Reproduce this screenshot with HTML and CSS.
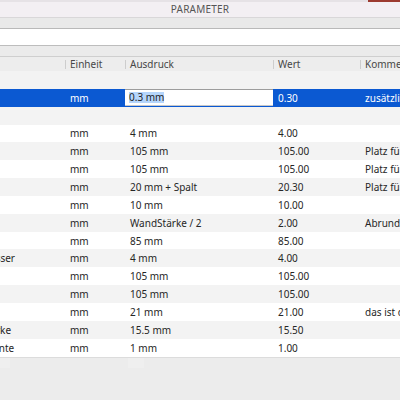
FILE: index.html
```html
<!DOCTYPE html>
<html lang="de">
<head>
<meta charset="utf-8">
<title>Parameter</title>
<link rel="stylesheet" href="styles.css">
</head>
<body>
<div class="window">
  <div class="topstrip"><span class="close-tab"></span></div>
  <div class="titlebar">PARAMETER</div>
  <div class="toolbar"></div>
  <div class="filter"></div>
  <div class="subbar"></div>

  <div class="table">
    <div class="row head">
      <div class="cell name">Name</div>
      <div class="cell sep">Einheit</div>
      <div class="cell sep">Ausdruck</div>
      <div class="cell sep">Wert</div>
      <div class="cell sep">Kommentar</div>
    </div>

    <div class="row odd"><div class="cell name"></div><div class="cell"></div><div class="cell"></div><div class="cell"></div><div class="cell"></div></div>

    <div class="row selected">
      <div class="cell name">Spalt</div>
      <div class="cell">mm</div>
      <div class="cell edit"><span class="field"><span class="sel">0.3 mm</span></span></div>
      <div class="cell">0.30</div>
      <div class="cell">zusätzlicher Spalt</div>
    </div>

    <div class="row odd"><div class="cell name"></div><div class="cell"></div><div class="cell"></div><div class="cell"></div><div class="cell"></div></div>

    <div class="row"><div class="cell name">Dicke</div><div class="cell">mm</div><div class="cell">4 mm</div><div class="cell">4.00</div><div class="cell"></div></div>
    <div class="row odd"><div class="cell name">Breite</div><div class="cell">mm</div><div class="cell">105 mm</div><div class="cell">105.00</div><div class="cell">Platz für Inhalt</div></div>
    <div class="row"><div class="cell name">Tiefe</div><div class="cell">mm</div><div class="cell">105 mm</div><div class="cell">105.00</div><div class="cell">Platz für Inhalt</div></div>
    <div class="row odd"><div class="cell name">Höhe</div><div class="cell">mm</div><div class="cell">20 mm + Spalt</div><div class="cell">20.30</div><div class="cell">Platz für Deckel</div></div>
    <div class="row"><div class="cell name">Rand</div><div class="cell">mm</div><div class="cell">10 mm</div><div class="cell">10.00</div><div class="cell"></div></div>
    <div class="row odd"><div class="cell name">Radius</div><div class="cell">mm</div><div class="cell">WandStärke / 2</div><div class="cell">2.00</div><div class="cell">Abrundung</div></div>
    <div class="row"><div class="cell name">Länge</div><div class="cell">mm</div><div class="cell">85 mm</div><div class="cell">85.00</div><div class="cell"></div></div>
    <div class="row odd"><div class="cell name">LochDurchmesser</div><div class="cell">mm</div><div class="cell">4 mm</div><div class="cell">4.00</div><div class="cell"></div></div>
    <div class="row"><div class="cell name">Außen</div><div class="cell">mm</div><div class="cell">105 mm</div><div class="cell">105.00</div><div class="cell"></div></div>
    <div class="row odd"><div class="cell name">Innen</div><div class="cell">mm</div><div class="cell">105 mm</div><div class="cell">105.00</div><div class="cell"></div></div>
    <div class="row"><div class="cell name">Boden</div><div class="cell">mm</div><div class="cell">21 mm</div><div class="cell">21.00</div><div class="cell">das ist der Boden</div></div>
    <div class="row odd"><div class="cell name">RandWandStärke</div><div class="cell">mm</div><div class="cell">15.5 mm</div><div class="cell">15.50</div><div class="cell"></div></div>
    <div class="row"><div class="cell name">Radius Oberkante</div><div class="cell">mm</div><div class="cell">1 mm</div><div class="cell">1.00</div><div class="cell"></div></div>
  </div>

  <div class="footer">
    <span class="ghost ghost-a"></span>
    <span class="ghost ghost-b"></span>
  </div>
</div>
</body>
</html>
```

FILE: styles.css
```css
html, body {
  margin: 0;
  padding: 0;
  width: 400px;
  height: 400px;
  overflow: hidden;
  background: #ececec;
  font-family: "Noto Sans", "Open Sans", sans-serif;
  font-size: 10px;
  color: #262626;
}

.window {
  width: 400px;
  height: 400px;
  overflow: hidden;
  display: flex;
  flex-direction: column;
}

.topstrip {
  height: 2px;
  background: #e6e2e6;
  position: relative;
}

.close-tab {
  position: absolute;
  right: 0;
  top: 0;
  width: 32px;
  height: 2px;
  background: #9c3a30;
}

.titlebar {
  height: 15px;
  line-height: 15px;
  background: #f3eff3;
  border-bottom: 1px solid #d9d7d9;
  text-align: center;
  color: #555;
  font-size: 10px;
  letter-spacing: 0.2px;
}

.toolbar {
  height: 10px;
  background: #e9e9e9;
  border-bottom: 1px solid #b9b9b9;
}

.filter {
  height: 16px;
  background: #ffffff;
  border-bottom: 1px solid #bdbdbd;
}

.subbar {
  height: 10px;
  background: #ebebeb;
  border-bottom: 1px solid #cfcfcf;
}

/* table is scrolled sideways: the name column starts left of the view */
.table {
  width: 560px;
  margin-left: -70px;
  display: flex;
  flex-direction: column;
}

.row {
  display: grid;
  grid-template-columns: 135px 60px 148px 87px 130px;
  height: 17.85px;
  align-items: center;
  background: #ffffff;
}

.row.odd {
  background: #f3f3f3;
}

.row.head {
  height: 14px;
  background: #ededed;
  color: #474747;
}

.cell {
  padding-left: 5px;
  white-space: nowrap;
  overflow: hidden;
  height: 100%;
  display: flex;
  align-items: center;
  box-sizing: border-box;
}

.cell.name {
  padding-left: 0;
}

.head .cell.sep {
  position: relative;
}

.head .cell.sep::before {
  content: "";
  position: absolute;
  left: 0;
  top: 3px;
  bottom: 2px;
  width: 1px;
  background: #cdcdcd;
}

.row.selected {
  background: #0b59d2;
  color: #ffffff;
}

.cell.edit {
  padding: 0;
}

.field {
  flex: 1;
  height: 17px;
  background: #ffffff;
  border-top: 1px solid #9d9d9d;
  border-bottom: 1px solid #c8c8c8;
  box-sizing: border-box;
  display: flex;
  align-items: center;
  padding-left: 4px;
  color: #1f1f1f;
}

.sel {
  background: #b5d5fb;
  line-height: 11px;
}

.footer {
  flex: 1;
  background: #ececec;
  border-top: 1px solid #dcdcdc;
  display: flex;
  align-items: flex-start;
}

/* faint leftovers of the horizontal scroller */
.ghost {
  height: 10px;
  background: #efefef;
}

.ghost-a {
  width: 10px;
}

.ghost-b {
  width: 16px;
  margin-left: 118px;
}
```
